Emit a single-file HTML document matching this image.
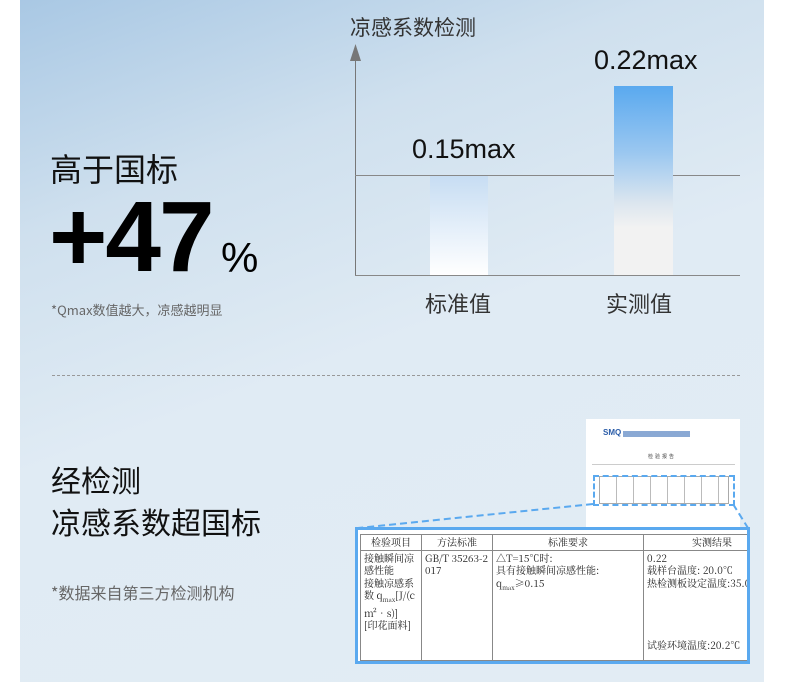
<!DOCTYPE html>
<html><head><meta charset="utf-8"><style>
body{margin:0;width:790px;height:695px;background:#fff;position:relative;overflow:hidden;font-family:"Liberation Sans","Noto Sans CJK SC",sans-serif}
.bg{position:absolute;left:20px;top:0;width:744px;height:682px;background:linear-gradient(160deg,#a9c8e4 0%,#cfe0ee 25%,#e0ebf4 50%,#e2ecf4 100%)}
.a{position:absolute;white-space:nowrap}
.t{font-family:"Noto Sans CJK SC",sans-serif}
table{border-collapse:collapse;table-layout:fixed;font-family:"Noto Serif CJK SC",serif;font-size:10px;color:#222}
td{border:1px solid #888;vertical-align:top;padding:1px 3px;line-height:12.5px;white-space:normal;word-break:break-all;overflow:hidden}
</style></head><body>
<div class="bg"></div>
<div class="a t" style="left:350px;top:12px;font-size:21px;color:#333">凉感系数检测</div>
<div class="a" style="left:355px;top:58px;width:1px;height:217px;background:#777"></div>
<svg class="a" style="left:349px;top:44px" width="13" height="18"><polygon points="6.5,0 12,17 1,17" fill="#777"/></svg>
<div class="a" style="left:355px;top:275px;width:385px;height:1px;background:#888"></div>
<div class="a" style="left:355px;top:175px;width:385px;height:1px;background:#888"></div>
<div class="a" style="left:430px;top:176px;width:58px;height:99px;background:linear-gradient(#c7ddf3,#fff)"></div>
<div class="a" style="left:614px;top:86px;width:59px;height:189px;background:linear-gradient(#5aa9ef 0%,#9ac7f0 35%,#dce6ef 62%,#f2f2f2 75%,#f2f2f2 100%)"></div>
<div class="a" style="left:412px;top:134px;font-size:27px;color:#111">0.15max</div>
<div class="a" style="left:594px;top:45px;font-size:27px;color:#111">0.22max</div>
<div class="a t" style="left:425px;top:287px;font-size:22px;color:#333">标准值</div>
<div class="a t" style="left:606px;top:287px;font-size:22px;color:#333">实测值</div>
<div class="a t" style="left:50px;top:145px;font-size:32px;color:#111">高于国标</div>
<div class="a" style="left:49px;top:180px;font-size:100px;font-weight:bold;color:#000;letter-spacing:-2px">+47</div>
<div class="a" style="left:221px;top:234px;font-size:42px;color:#000">%</div>
<div class="a t" style="left:51px;top:300px;font-size:13px;color:#666">*Qmax数值越大，凉感越明显</div>
<div class="a" style="left:52px;top:375px;width:688px;border-top:1px dashed #999"></div>
<div class="a t" style="left:51px;top:458px;font-size:30px;color:#111;line-height:42px">经检测<br>凉感系数超国标</div>
<div class="a t" style="left:51px;top:580px;font-size:16px;color:#666">*数据来自第三方检测机构</div>
<div class="a" style="left:586px;top:419px;width:154px;height:108px;background:#fff"></div>
<div class="a" style="left:603px;top:428px;font-size:8px;font-weight:bold;color:#2a5ca8">SMQ <span style="font-size:5px;background:#8aa9d4;color:#8aa9d4">xxxxxxxxxxxxxxxxxxxxxxxx</span></div>
<div class="a" style="left:648px;top:453px;font-size:5px;color:#444;letter-spacing:2px">检验报告</div>
<div class="a" style="left:592px;top:464px;width:143px;border-top:1px solid #ccc"></div>
<div class="a" style="left:599px;top:476px;width:128px;height:26px;border:1px solid #aaa;background:repeating-linear-gradient(90deg,transparent 0 16px,#bbb 16px 17px)"></div>
<div class="a" style="left:593px;top:475px;width:138px;height:27px;border:2px dashed #5aa9ef"></div>
<svg class="a" style="left:350px;top:500px" width="410" height="32"><line x1="243" y1="4" x2="8" y2="28" stroke="#5aa9ef" stroke-width="2" stroke-dasharray="7,4"/><line x1="383" y1="4" x2="398" y2="28" stroke="#5aa9ef" stroke-width="2" stroke-dasharray="7,4"/></svg>
<div class="a" style="left:355px;top:527px;width:389px;height:131px;border:3px solid #5aa9ef;background:#fff;overflow:hidden">
<table style="margin:4px 0 0 2px;width:420px">
<colgroup><col style="width:61px"><col style="width:71px"><col style="width:151px"><col style="width:137px"></colgroup>
<tr style="text-align:center"><td>检验项目</td><td>方法标准</td><td>标准要求</td><td>实测结果</td></tr>
<tr style="height:110px"><td>接触瞬间凉感性能<br>接触凉感系数 q<sub style="font-size:6px">max</sub>[J/(cm²•s)]<br>[印花面料]</td><td>GB/T 35263-2017</td><td>△T=15℃时:<br>具有接触瞬间凉感性能:<br>q<sub style="font-size:6px">max</sub>≥0.15</td><td style="white-space:nowrap">0.22<br>载样台温度: 20.0℃<br>热检测板设定温度:35.0℃<br><br><br><br><br>试验环境温度:20.2℃</td></tr>
</table></div>
</body></html>
